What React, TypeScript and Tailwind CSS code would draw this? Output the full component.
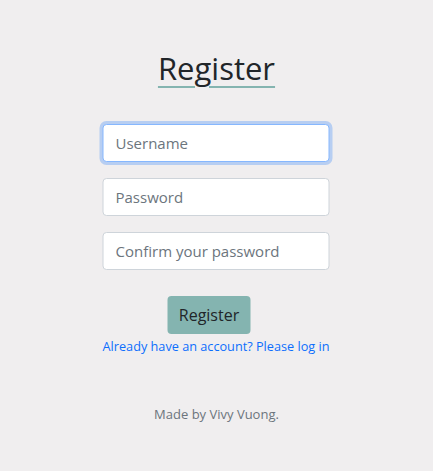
export default function App() {
  return (
    <div
      className="min-h-[471px] w-full bg-[#f0eeef] flex flex-col items-center"
      style={{ fontFamily: '"Open Sans", "Noto Sans", sans-serif' }}
    >
      <h1 className="mt-[46px] text-[31px] leading-[44px] text-[#212529] underline decoration-[#84b4b0] decoration-2 underline-offset-[6px]">
        Register
      </h1>
      <form className="mt-[34px] w-[227px] -translate-x-[0.5px] flex flex-col gap-4">
        <input
          className="h-[38px] w-full rounded-[4px] bg-white px-3 text-[15px] text-[#495057] placeholder-[#6c757d] border border-[#86b7fe] outline-none shadow-[0_0_0_3px_rgba(13,110,253,0.25)]"
          placeholder="Username"
        />
        <input
          type="password"
          className="h-[38px] w-full rounded-[4px] bg-white px-3 text-[15px] placeholder-[#6c757d] border border-[#ced4da] outline-none"
          placeholder="Password"
        />
        <input
          type="password"
          className="h-[38px] w-full rounded-[4px] bg-white px-3 text-[15px] placeholder-[#6c757d] border border-[#ced4da] outline-none"
          placeholder="Confirm your password"
        />
        <div className="mt-[10px] flex flex-col items-center">
          <button
            type="button"
            className="mr-[14px] h-[38px] w-[83px] rounded-[4px] bg-[#84b4b0] text-[16px] text-[#212529]"
          >
            Register
          </button>
          <a href="#" className="mt-[3px] text-[12.7px] leading-[18px] text-[#0d6efd] whitespace-nowrap">
            Already have an account? Please log in
          </a>
        </div>
      </form>
      <p className="mt-[50px] text-[13px] text-[#6c757d]">Made by Vivy Vuong.</p>
    </div>
  );
}
